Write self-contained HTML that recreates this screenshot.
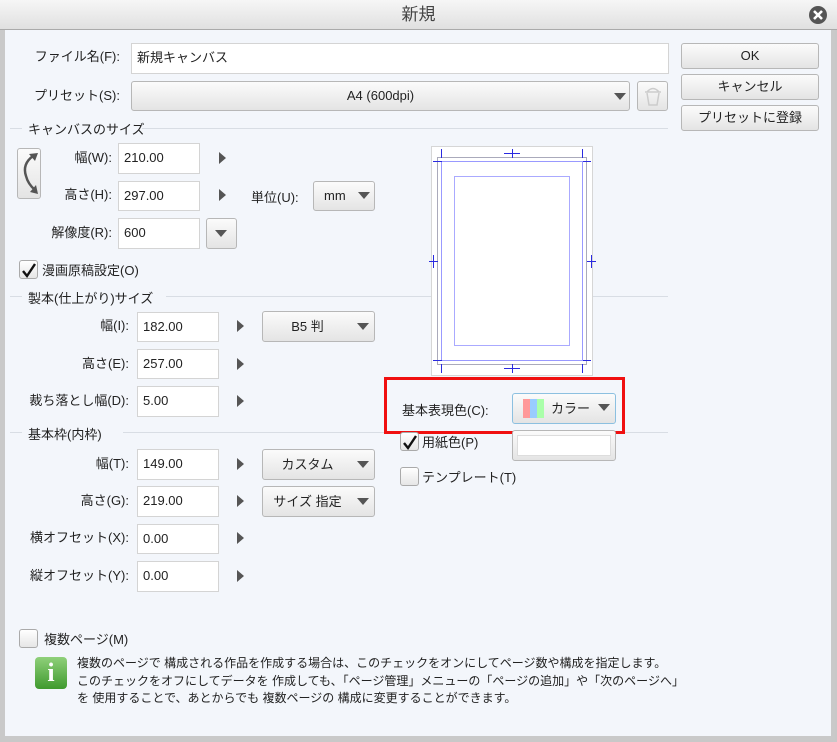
<!DOCTYPE html>
<html><head><meta charset="utf-8"><style>
*{box-sizing:border-box;margin:0;padding:0}
body{width:837px;height:742px;overflow:hidden;background:#c8c8c8;font-family:"Liberation Sans","Noto Sans CJK JP",sans-serif;font-size:13px;color:#222;position:relative}
#win{position:absolute;left:0;top:0;width:835px;height:740px;background:#f3f6fb;border:1px solid #999;border-left:5px solid #c9c9c9;border-right:4px solid #c9c9c9;border-bottom:4px solid #c9c9c9}
#title{position:absolute;left:0;top:0;width:837px;height:30px;background:linear-gradient(#f6f6f6,#e0e0e0);border-bottom:1px solid #aaa;text-align:center;line-height:30px;font-size:17px;color:#444}
.a{position:absolute;white-space:nowrap}
.lbl{position:absolute;white-space:nowrap;text-align:right;line-height:16px}
.in{position:absolute;background:#fff;border:1px solid #d4d4d4;padding-left:5px;line-height:28px}
.btn{position:absolute;background:linear-gradient(#fbfbfb,#e4e4e4);border:1px solid #b7b7b7;border-radius:3px;text-align:center}
.tri{position:absolute;width:0;height:0;border-left:6px solid transparent;border-right:6px solid transparent;border-top:7px solid #555}
.rt{position:absolute;width:0;height:0;border-top:6px solid transparent;border-bottom:6px solid transparent;border-left:7px solid #555}
.sec{position:absolute;height:1px;background:#d8dde4}
.cb{position:absolute;width:19px;height:19px;border:1px solid #aaa;border-radius:3px;background:linear-gradient(#fff,#e6e6e6)}
.ck{position:absolute;left:1px;top:1px}
</style></head><body>
<div id="win"></div>
<div id="title">新規</div>
<svg class="a" style="left:808px;top:5px" width="20" height="20"><circle cx="10" cy="10" r="9" fill="#555"/><path d="M6 6L14 14M14 6L6 14" stroke="#fff" stroke-width="2.6"/></svg>

<div class="lbl" style="left:20px;width:100px;top:49px">ファイル名(F):</div>
<div class="in" style="left:131px;top:43px;width:538px;height:31px">新規キャンバス</div>
<div class="lbl" style="left:20px;width:100px;top:88px">プリセット(S):</div>
<div class="btn" style="left:131px;top:81px;width:499px;height:30px;line-height:28px">A4 (600dpi)</div>
<div class="tri" style="left:614px;top:93px"></div>
<div class="btn" style="left:637px;top:81px;width:31px;height:30px"></div>
<svg class="a" style="left:641px;top:84px" width="24" height="24"><path d="M4 8h16M6 8q6-7 12 0M6 9l2 12h8l2-12" fill="none" stroke="#ccc" stroke-width="1.5"/></svg>

<div class="btn" style="left:681px;top:43px;width:138px;height:26px;line-height:24px">OK</div>
<div class="btn" style="left:681px;top:74px;width:138px;height:26px;line-height:24px">キャンセル</div>
<div class="btn" style="left:681px;top:105px;width:138px;height:26px;line-height:24px">プリセットに登録</div>

<div class="sec" style="left:10px;top:128px;width:12px"></div>
<div class="a" style="left:28px;top:119px">キャンバスのサイズ</div>
<div class="sec" style="left:142px;top:128px;width:526px"></div>

<div class="btn" style="left:17px;top:148px;width:24px;height:51px"></div>
<svg class="a" style="left:18px;top:150px" width="22" height="47"><path d="M15 6Q4 14 8 26Q10 34 17 40" fill="none" stroke="#555" stroke-width="2.5"/><path d="M11 4l9-1-3 8z" fill="#555"/><path d="M12 42l8 2-2-9z" fill="#555"/></svg>

<div class="lbl" style="left:40px;width:72px;top:150px">幅(W):</div>
<div class="in" style="left:118px;top:143px;width:82px;height:31px">210.00</div>
<div class="rt" style="left:219px;top:152px"></div>
<div class="lbl" style="left:40px;width:72px;top:187px">高さ(H):</div>
<div class="in" style="left:118px;top:181px;width:82px;height:30px">297.00</div>
<div class="rt" style="left:219px;top:189px"></div>
<div class="a" style="left:251px;top:187px">単位(U):</div>
<div class="btn" style="left:313px;top:181px;width:62px;height:30px;line-height:28px;text-align:left;padding-left:10px">mm</div>
<div class="tri" style="left:358px;top:192px"></div>
<div class="lbl" style="left:30px;width:82px;top:225px">解像度(R):</div>
<div class="in" style="left:118px;top:218px;width:82px;height:31px">600</div>
<div class="btn" style="left:206px;top:218px;width:31px;height:31px"></div>
<div class="tri" style="left:215px;top:230px"></div>

<div class="cb" style="left:19px;top:260px"><svg class="ck" width="17" height="17"><path d="M2 9l4 5 8-12" fill="none" stroke="#111" stroke-width="2.4"/></svg></div>
<div class="a" style="left:42px;top:260px">漫画原稿設定(O)</div>

<div class="sec" style="left:10px;top:296px;width:12px"></div>
<div class="a" style="left:28px;top:288px">製本(仕上がり)サイズ</div>
<div class="sec" style="left:166px;top:296px;width:502px"></div>

<div class="lbl" style="left:20px;width:109px;top:318px">幅(I):</div>
<div class="in" style="left:137px;top:312px;width:82px;height:30px">182.00</div>
<div class="rt" style="left:237px;top:320px"></div>
<div class="btn" style="left:262px;top:311px;width:113px;height:31px;line-height:29px;padding-right:22px">B5 判</div>
<div class="tri" style="left:357px;top:323px"></div>
<div class="lbl" style="left:20px;width:109px;top:356px">高さ(E):</div>
<div class="in" style="left:137px;top:349px;width:82px;height:30px">257.00</div>
<div class="rt" style="left:237px;top:358px"></div>
<div class="lbl" style="left:20px;width:109px;top:393px">裁ち落とし幅(D):</div>
<div class="in" style="left:137px;top:386px;width:82px;height:31px">5.00</div>
<div class="rt" style="left:237px;top:395px"></div>

<div class="sec" style="left:10px;top:432px;width:12px"></div>
<div class="a" style="left:28px;top:424px">基本枠(内枠)</div>
<div class="sec" style="left:123px;top:432px;width:545px"></div>

<div class="lbl" style="left:20px;width:109px;top:456px">幅(T):</div>
<div class="in" style="left:137px;top:449px;width:82px;height:31px">149.00</div>
<div class="rt" style="left:237px;top:458px"></div>
<div class="btn" style="left:262px;top:449px;width:113px;height:31px;line-height:29px;padding-right:22px">カスタム</div>
<div class="tri" style="left:357px;top:461px"></div>
<div class="lbl" style="left:20px;width:109px;top:493px">高さ(G):</div>
<div class="in" style="left:137px;top:486px;width:82px;height:31px">219.00</div>
<div class="rt" style="left:237px;top:495px"></div>
<div class="btn" style="left:262px;top:486px;width:113px;height:31px;line-height:29px;padding-right:22px">サイズ 指定</div>
<div class="tri" style="left:357px;top:498px"></div>
<div class="lbl" style="left:20px;width:109px;top:530px">横オフセット(X):</div>
<div class="in" style="left:137px;top:524px;width:82px;height:30px">0.00</div>
<div class="rt" style="left:237px;top:532px"></div>
<div class="lbl" style="left:20px;width:109px;top:568px">縦オフセット(Y):</div>
<div class="in" style="left:137px;top:561px;width:82px;height:31px">0.00</div>
<div class="rt" style="left:237px;top:570px"></div>

<svg class="a" style="left:0;top:0" width="837" height="400">
<rect x="431.5" y="146.5" width="161" height="229" fill="#fff" stroke="#d6d6d6"/>
<rect x="437.5" y="157.5" width="149" height="207" fill="none" stroke="#aab" stroke-width="1"/>
<rect x="441.5" y="161.5" width="141" height="199" fill="none" stroke="#99f"/>
<rect x="454.5" y="176.5" width="115" height="169" fill="none" stroke="#aaf"/>
<g stroke="#2a2ae0" stroke-width="1">
<path d="M441.5 149v9M582.5 149v9M433 161.5h9M583 161.5h8M441.5 364v9M582.5 364v9M433 360.5h9M583 360.5h8"/>
<path d="M504 153.5h16M512.5 149v9M504 368.5h16M512.5 364v9M429 261.5h9M433.5 255v13M587 261.5h9M591.5 255v13"/>
</g>
</svg>

<div class="a" style="left:384px;top:377px;width:241px;height:57px;border:3px solid #f01010"></div>
<div class="a" style="left:402px;top:400px">基本表現色(C):</div>
<div class="btn" style="left:512px;top:393px;width:104px;height:31px;border-color:#8cc0e0;line-height:29px;padding-left:38px;text-align:left">カラー</div>
<div class="a" style="left:523px;top:399px;width:7px;height:19px;background:#f99"></div>
<div class="a" style="left:530px;top:399px;width:7px;height:19px;background:#9cf"></div>
<div class="a" style="left:537px;top:399px;width:7px;height:19px;background:#afa"></div>
<div class="tri" style="left:598px;top:404px"></div>

<div class="cb" style="left:400px;top:432px"><svg class="ck" width="17" height="17"><path d="M2 9l4 5 8-12" fill="none" stroke="#111" stroke-width="2.4"/></svg></div>
<div class="a" style="left:422px;top:432px">用紙色(P)</div>
<div class="btn" style="left:512px;top:430px;width:104px;height:31px;padding:4px"><div style="background:#fff;height:100%;border:1px solid #ddd"></div></div>
<div class="cb" style="left:400px;top:467px"></div>
<div class="a" style="left:422px;top:467px">テンプレート(T)</div>

<div class="cb" style="left:19px;top:629px"></div>
<div class="a" style="left:44px;top:629px">複数ページ(M)</div>
<div class="a" style="left:35px;top:657px;width:32px;height:32px;border-radius:4px;background:linear-gradient(#8fd07a,#3f9a2e);color:#fff;font-family:'Liberation Serif',serif;font-weight:bold;font-size:26px;text-align:center;line-height:32px">i</div>
<div class="a" style="left:77px;top:655px;font-size:12px;line-height:17.5px">複数のページで 構成される作品を作成する場合は、このチェックをオンにしてページ数や構成を指定します。<br>このチェックをオフにしてデータを 作成しても、「ページ管理」メニューの「ページの追加」や「次のページへ」<br>を 使用することで、あとからでも 複数ページの 構成に変更することができます。</div>
</body></html>
